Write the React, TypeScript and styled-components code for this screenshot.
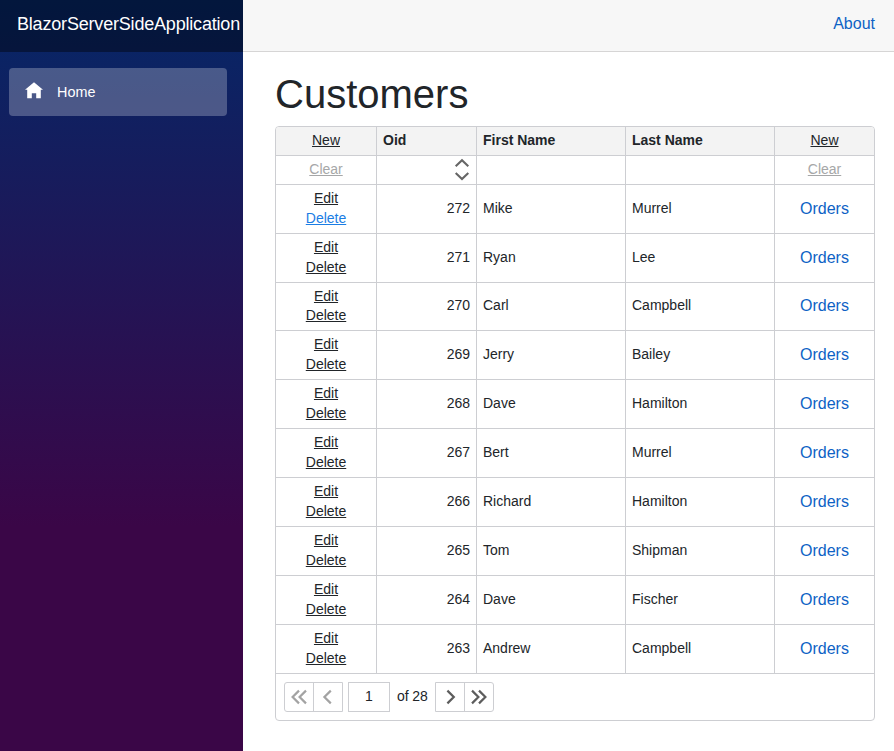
import React from "react";
import styled, { createGlobalStyle } from "styled-components";

const GlobalStyle = createGlobalStyle`
  *, *::before, *::after { box-sizing: border-box; }
  body { margin: 0; background: #fff; }
  body, button, input {
    font-family: "Liberation Sans", Arial, sans-serif;
    color: #212529;
  }
`;

const line = "#cdced2";

const Page = styled.div`
  display: flex;
  height: 751px;
  overflow: hidden;
`;

const Sidebar = styled.aside`
  flex: 0 0 243px;
  min-width: 0;
  background: linear-gradient(180deg, rgb(5, 39, 103) 0%, #3a0647 70%);
`;

const Brand = styled.div`
  display: flex;
  align-items: center;
  height: 52px;
  padding: 0 0 4px 17px;
  background: rgba(0, 0, 0, 0.4);
  color: #fff;
  font-size: 18px;
  letter-spacing: -0.19px;
  white-space: nowrap;
`;

const NavLink = styled.a`
  display: flex;
  align-items: center;
  width: 218px;
  height: 48px;
  margin: 16px 0 0 9px;
  padding-left: 16px;
  gap: 14px;
  border-radius: 4px;
  background: rgba(255, 255, 255, 0.25);
  color: #fff;
  font-size: 14.4px;
`;

const HomeIcon = styled.svg`
  margin-bottom: 3px;
`;

const Main = styled.main`
  flex: 1;
  min-width: 0;
`;

const TopBar = styled.header`
  display: flex;
  justify-content: flex-end;
  align-items: center;
  height: 52px;
  padding: 0 19px 4px 0;
  background: #f7f7f7;
  border-bottom: 1px solid #d6d5d5;
`;

const BlueLink = styled.a`
  color: #0d62c5;
  font-size: 16px;
`;

const Content = styled.section`
  padding: 18px 19px 0 32px;
`;

const Title = styled.h1`
  margin: 0 0 8px;
  font-size: 40px;
  line-height: 48px;
  font-weight: 400;
`;

const Grid = styled.div`
  width: 600px;
  border: 1px solid ${line};
  border-radius: 4px;
  overflow: hidden;
  font-size: 14px;
`;

const Row = styled.div<{ $height: number; $head?: boolean }>`
  display: grid;
  grid-template-columns: 101px 100px 149px 149px 99px;
  height: ${(p) => p.$height}px;
  border-bottom: 1px solid ${line};
  background: ${(p) => (p.$head ? "#f3f3f3" : "#fff")};
  font-weight: ${(p) => (p.$head ? 700 : 400)};
`;

const Cell = styled.div<{ $align?: "center" | "flex-end"; $inset?: number }>`
  display: flex;
  align-items: center;
  justify-content: ${(p) => p.$align ?? "flex-start"};
  padding: 0 6px ${(p) => p.$inset ?? 2}px;
  line-height: 20px;
  border-right: 1px solid ${line};
  &:last-child { border-right: 0; }
`;

const Commands = styled.div<{ $tight?: boolean }>`
  display: flex;
  flex-direction: column;
  align-items: center;
  line-height: ${(p) => (p.$tight ? 19 : 20)}px;
`;

const Command = styled.a<{ $tone?: "muted" | "active" }>`
  font-weight: 400;
  text-decoration: underline;
  color: ${(p) => (p.$tone === "muted" ? "#a6a7a8" : p.$tone === "active" ? "#1b7de4" : "#212529")};
`;

const Pager = styled.nav`
  display: flex;
  align-items: center;
  height: 46px;
  padding-left: 8px;
`;

const ButtonPair = styled.div<{ $side: "left" | "right" }>`
  display: flex;
  width: 59px;
  height: 30px;
  border: 1px solid ${line};
  border-radius: ${(p) => (p.$side === "left" ? "3px 0 0 3px" : "0 3px 3px 0")};
  color: ${(p) => (p.$side === "left" ? "#a3a3a3" : "#5d5d5d")};
`;

const PagerButton = styled.button`
  display: flex;
  align-items: center;
  justify-content: center;
  flex: 0 0 28px;
  padding: 0;
  border: 0;
  background: none;
  color: inherit;
  & + & { flex-basis: 29px; border-left: 1px solid ${line}; }
`;

const PageInput = styled.input`
  width: 42px;
  height: 30px;
  margin: 0 7px 0 5px;
  padding: 0 0 2px;
  border: 1px solid ${line};
  text-align: center;
  font-size: 14px;
`;

const PageCount = styled.span`
  width: 38px;
  letter-spacing: -0.1px;
  padding-bottom: 2px;
  white-space: nowrap;
`;

const Chevrons = ({ dir, double }: { dir: "left" | "right"; double?: boolean }) => {
  const paths =
    dir === "left"
      ? double ? ["M8 1.6L1.6 8 8 14.4", "M15 1.6L8.6 8l6.4 6.4"] : ["M10.8 1.6L4.4 8l6.4 6.4"]
      : double ? ["M1 1.6L7.4 8 1 14.4", "M8 1.6L14.4 8 8 14.4"] : ["M5.4 1.6L11.8 8l-6.4 6.4"];
  return (
    <svg width="16" height="16" viewBox="0 0 16 16" fill="none" stroke="currentColor" strokeWidth="2.2">
      {paths.map((d) => <path key={d} d={d} />)}
    </svg>
  );
};

const customers = [
  [272, "Mike", "Murrel"],
  [271, "Ryan", "Lee"],
  [270, "Carl", "Campbell"],
  [269, "Jerry", "Bailey"],
  [268, "Dave", "Hamilton"],
  [267, "Bert", "Murrel"],
  [266, "Richard", "Hamilton"],
  [265, "Tom", "Shipman"],
  [264, "Dave", "Fischer"],
  [263, "Andrew", "Campbell"],
] as const;

export default function App() {
  return (
    <>
      <GlobalStyle />
      <Page>
        <Sidebar>
          <Brand>BlazorServerSideApplication</Brand>
          <NavLink>
            <HomeIcon width="18" height="17" viewBox="0 0 18 17" fill="#fff">
              <path d="M9 .3L0 7.8h2.2V16.3h4.6v-5h4.4v5h4.6V7.8H18z" />
            </HomeIcon>
            Home
          </NavLink>
        </Sidebar>
        <Main>
          <TopBar><BlueLink>About</BlueLink></TopBar>
          <Content>
            <Title>Customers</Title>
            <Grid>
              <Row $height={29} $head>
                <Cell $align="center"><Command>New</Command></Cell>
                <Cell>Oid</Cell>
                <Cell>First Name</Cell>
                <Cell>Last Name</Cell>
                <Cell $align="center"><Command>New</Command></Cell>
              </Row>
              <Row $height={29}>
                <Cell $align="center"><Command $tone="muted">Clear</Command></Cell>
                <Cell $align="flex-end" $inset={0}>
                  <svg width="16" height="24" viewBox="0 0 16 24" fill="none" stroke="#666" strokeWidth="2.1">
                    <path d="M1.7 8.2l6.3-6 6.3 6M1.7 15l6.3 6 6.3-6" />
                  </svg>
                </Cell>
                <Cell />
                <Cell />
                <Cell $align="center"><Command $tone="muted">Clear</Command></Cell>
              </Row>
              {customers.map(([oid, first, last], i) => {
                const inset = i === 2 ? 3 : 2;
                return (
                  <Row key={oid} $height={i === 2 ? 48 : 49}>
                    <Cell $align="center">
                      <Commands $tight={i === 2}>
                        <Command>Edit</Command>
                        <Command $tone={i === 0 ? "active" : undefined}>Delete</Command>
                      </Commands>
                    </Cell>
                    <Cell $align="flex-end" $inset={inset}>{oid}</Cell>
                    <Cell $inset={inset}>{first}</Cell>
                    <Cell $inset={inset}>{last}</Cell>
                    <Cell $align="center" $inset={i === 2 ? 2 : 0}><BlueLink>Orders</BlueLink></Cell>
                  </Row>
                );
              })}
              <Pager>
                <ButtonPair $side="left">
                  <PagerButton aria-label="First page"><Chevrons dir="left" double /></PagerButton>
                  <PagerButton aria-label="Previous page"><Chevrons dir="left" /></PagerButton>
                </ButtonPair>
                <PageInput defaultValue="1" />
                <PageCount>of 28</PageCount>
                <ButtonPair $side="right">
                  <PagerButton aria-label="Next page"><Chevrons dir="right" /></PagerButton>
                  <PagerButton aria-label="Last page"><Chevrons dir="right" double /></PagerButton>
                </ButtonPair>
              </Pager>
            </Grid>
          </Content>
        </Main>
      </Page>
    </>
  );
}
